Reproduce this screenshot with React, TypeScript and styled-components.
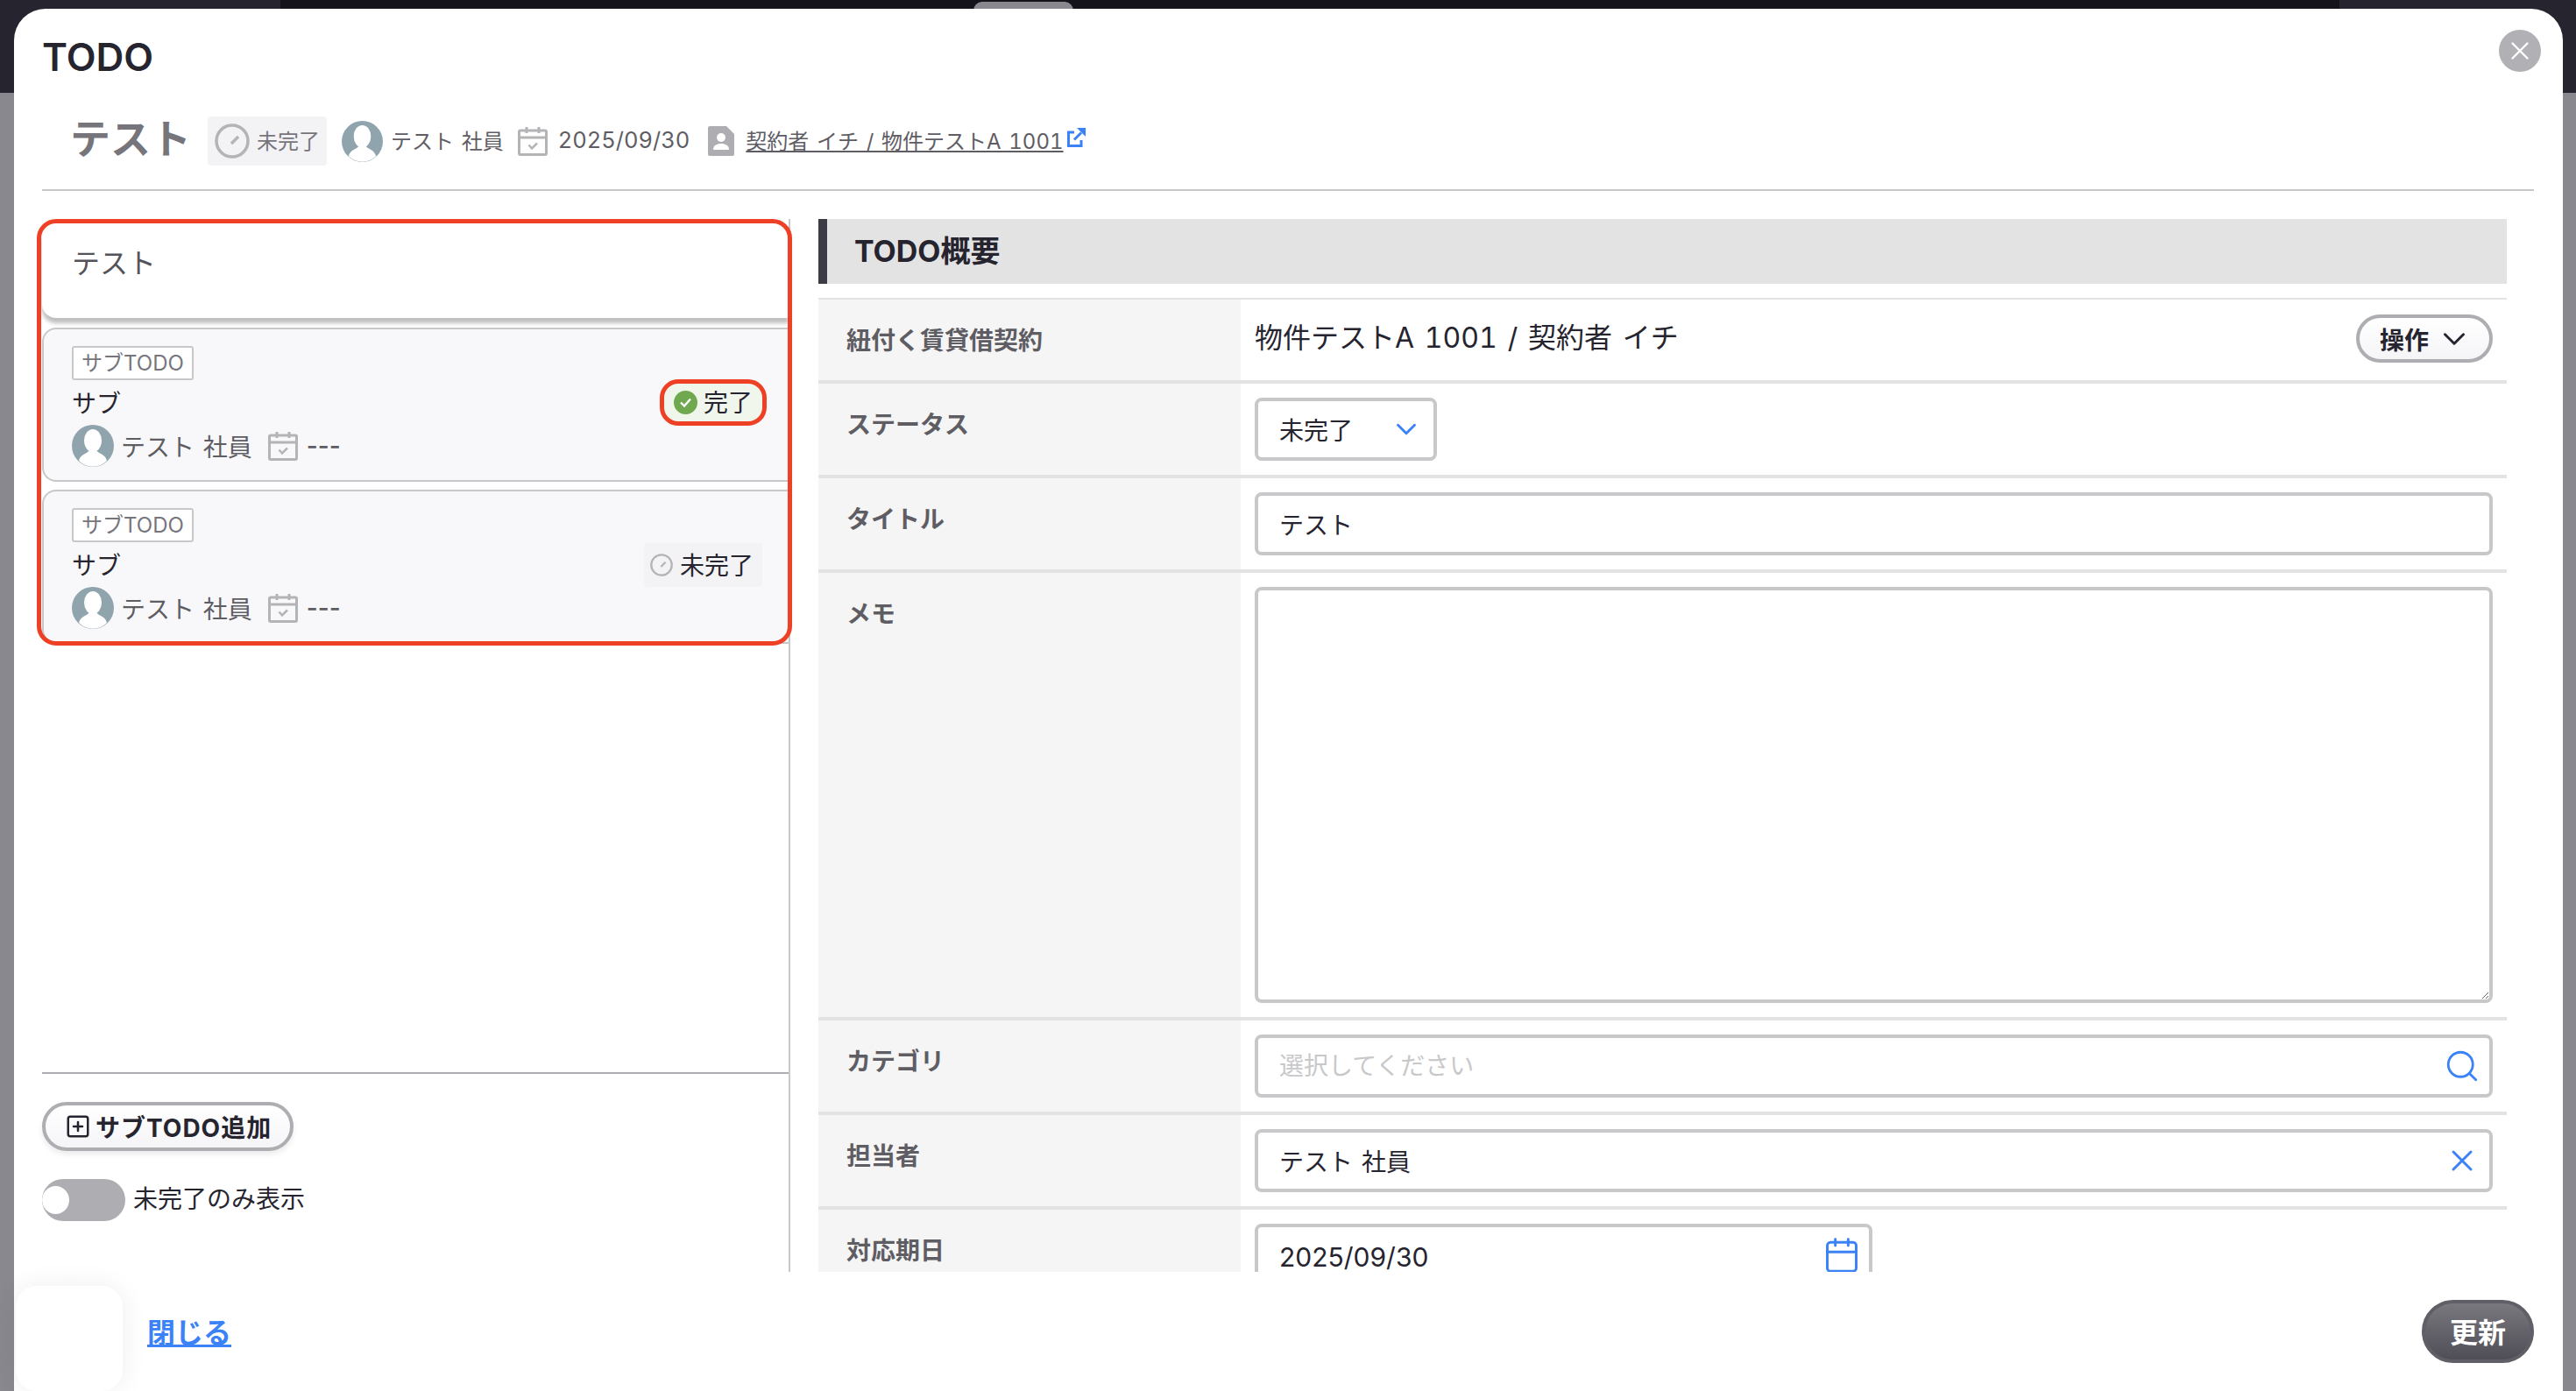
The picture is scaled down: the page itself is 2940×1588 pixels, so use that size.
import { createGlobalStyle, styled } from 'styled-components';
import { Calendar, ChevronDown, Search, SquarePlus, X } from 'lucide-react';

const GlobalStyle = createGlobalStyle`
  html, body {
    margin: 0;
    padding: 0;
    background: #8a888f;
  }
  * {
    box-sizing: border-box;
  }
  body {
    font-family: Inter, "Noto Sans CJK JP", "Noto Sans", sans-serif;
    font-variant-numeric: tabular-nums;
    color: #26242e;
    word-spacing: 0.14em;
  }
`;

function AvatarIcon({ size }: { size: number }) {
  return (
    <svg width={size} height={size} viewBox="0 0 48 48">
      <circle cx="24" cy="24" r="24" fill="#90a4ae" />
      <ellipse cx="24" cy="18" rx="10" ry="13" fill="#fff" />
      <path d="M8 41c2-8 10-8 12-12h8c2 4 10 4 12 12a22.5 22.5 0 0 1-32 0z" fill="#fff" />
    </svg>
  );
}

function PendingIcon({ size }: { size: number }) {
  return (
    <svg width={size} height={size} viewBox="0 0 40 40" fill="none">
      <circle cx="20" cy="20" r="18" stroke="#b4b4b7" strokeWidth="3.5" />
      <path d="M19 23l8-8" stroke="#b4b4b7" strokeWidth="3.5" />
    </svg>
  );
}

function DoneIcon() {
  return (
    <svg width="27" height="27" viewBox="0 0 27 27" fill="none">
      <circle cx="13.5" cy="13.5" r="13.5" fill="#6fa84f" />
      <path d="M8 13.5l4 4 7-8" stroke="#fff" strokeWidth="2.4" />
    </svg>
  );
}

function DateIcon({ size }: { size: number }) {
  return (
    <svg width={size} height={size} viewBox="0 0 34 34" fill="none" stroke="#b4b4b7">
      <rect x="1.5" y="5" width="31" height="27.5" rx="1.5" strokeWidth="3" />
      <path d="M1.5 13h31" strokeWidth="3" />
      <path d="M10 1v7M24 1v7" strokeWidth="3" />
      <path d="M12.5 21.5l3.5 4 6-6" strokeWidth="2.5" />
    </svg>
  );
}

function ContractIcon() {
  return (
    <svg width="30" height="34" viewBox="0 0 30 34">
      <path d="M2 0h19l9 9v23a2 2 0 0 1-2 2H2a2 2 0 0 1-2-2V2a2 2 0 0 1 2-2z" fill="#aeadb2" />
      <circle cx="15" cy="13" r="5" fill="#fff" />
      <path d="M6 27c0-5 4-7 9-7s9 2 9 7z" fill="#fff" />
    </svg>
  );
}

function ExternalIcon() {
  return (
    <svg width="21" height="22" viewBox="0 0 21 22" fill="none" stroke="#3b82f6" strokeWidth="3">
      <path d="M8 5H1.5v15.5H16V14" />
      <path d="M8 13.5L16 5.5" />
      <path d="M11 0h10v10z" fill="#3b82f6" stroke="none" />
    </svg>
  );
}

function StatusChip({ done, highlight }: { done: boolean; highlight?: boolean }) {
  return done ? (
    <DoneChip $highlight={highlight}>
      <DoneIcon />
      <ChipText>完了</ChipText>
    </DoneChip>
  ) : (
    <PendingChip>
      <PendingIcon size={26} />
      <ChipText>未完了</ChipText>
    </PendingChip>
  );
}

function SubTodoCard({ name, done }: { name: string; done: boolean }) {
  return (
    <SubCard>
      <SubCardBody>
        <SubTag>サブTODO</SubTag>
        <SubName>{name}</SubName>
        <SubMeta>
          <AvatarIcon size={48} />
          <SubPerson>テスト 社員</SubPerson>
          <DateIcon size={34} />
          <SubDate>---</SubDate>
        </SubMeta>
      </SubCardBody>
      <StatusChip done={done} highlight={done} />
    </SubCard>
  );
}

export default function App() {
  return (
    <Page>
      <GlobalStyle />
      <Backdrop>
        <TopBar>
          <TopBarSide />
          <TopBarMiddle />
          <TopBarSide />
          <Handle />
        </TopBar>
      </Backdrop>
      <Modal>
        <CloseButton>
          <X size={34} color="#fff" strokeWidth={1.7} />
        </CloseButton>
        <Title>TODO</Title>
        <MetaRow>
          <MetaTitle>テスト</MetaTitle>
          <MetaChip>
            <PendingIcon size={40} />
            <MetaText>未完了</MetaText>
          </MetaChip>
          <MetaItem $gap={9} $left={17}>
            <AvatarIcon size={47} />
            <MetaText>テスト 社員</MetaText>
          </MetaItem>
          <MetaItem $gap={12} $left={16}>
            <DateIcon size={34} />
            <MetaDate>2025/09/30</MetaDate>
          </MetaItem>
          <MetaItem $gap={13} $left={21}>
            <ContractIcon />
            <MetaLink>契約者 イチ / 物件テストA 1001</MetaLink>
            <ExternalSlot>
              <ExternalIcon />
            </ExternalSlot>
          </MetaItem>
        </MetaRow>
        <Body>
          <LeftColumn>
            <TodoList>
              <MainCard>テスト</MainCard>
              <SubCards>
                <SubTodoCard name="サブ" done />
                <SubTodoCard name="サブ" done={false} />
              </SubCards>
              <RedFrame />
            </TodoList>
            <LeftFooter>
              <AddButton>
                <SquarePlus size={30} strokeWidth={2} />
                サブTODO追加
              </AddButton>
              <ToggleRow>
                <Toggle>
                  <ToggleKnob />
                </Toggle>
                <ToggleLabel>未完了のみ表示</ToggleLabel>
              </ToggleRow>
            </LeftFooter>
          </LeftColumn>
          <RightColumn>
            <SectionHeader>TODO概要</SectionHeader>
            <Table>
              <Row>
                <Label>紐付く賃貸借契約</Label>
                <ContractValue>
                  <ContractText>物件テストA 1001 / 契約者 イチ</ContractText>
                  <ActionButton>
                    操作
                    <ChevronDown size={42} strokeWidth={1.7} />
                  </ActionButton>
                </ContractValue>
              </Row>
              <Row>
                <Label>ステータス</Label>
                <Value>
                  <SelectBox>
                    未完了
                    <ChevronDown size={38} color="#3b82f6" strokeWidth={1.8} />
                  </SelectBox>
                </Value>
              </Row>
              <Row>
                <Label>タイトル</Label>
                <Value>
                  <TextInput readOnly value="テスト" />
                </Value>
              </Row>
              <Row>
                <Label>メモ</Label>
                <Value>
                  <Memo readOnly />
                </Value>
              </Row>
              <Row>
                <Label>カテゴリ</Label>
                <Value>
                  <InputWrap>
                    <TextInput readOnly placeholder="選択してください" />
                    <FieldIcon $right={14}>
                      <Search size={42} color="#3b82f6" strokeWidth={1.6} />
                    </FieldIcon>
                  </InputWrap>
                </Value>
              </Row>
              <Row>
                <Label>担当者</Label>
                <Value>
                  <InputWrap>
                    <TextInput readOnly value="テスト 社員" />
                    <FieldIcon $right={15}>
                      <X size={40} color="#3b82f6" strokeWidth={1.8} />
                    </FieldIcon>
                  </InputWrap>
                </Value>
              </Row>
              <Row>
                <Label>対応期日</Label>
                <Value>
                  <DateWrap>
                    <DateInput readOnly value="2025/09/30" />
                    <FieldIcon $right={13}>
                      <Calendar size={44} color="#3b82f6" strokeWidth={1.6} />
                    </FieldIcon>
                  </DateWrap>
                </Value>
              </Row>
            </Table>
          </RightColumn>
        </Body>
        <Footer>
          <FloatingBox />
          <CloseLink>閉じる</CloseLink>
          <UpdateButton>更新</UpdateButton>
        </Footer>
      </Modal>
    </Page>
  );
}

const Page = styled.div`
  position: relative;
  width: 2940px;
  height: 1588px;
  overflow: hidden;
`;

const Backdrop = styled.div`
  height: 100%;
  background: #8a888f;
`;

const TopBar = styled.div`
  position: relative;
  display: grid;
  grid-template-columns: 320px 1fr 270px;
  height: 106px;
`;

const TopBarSide = styled.div`
  background: #26242f;
`;

const TopBarMiddle = styled.div`
  background: #14121a;
`;

const Handle = styled.div`
  position: absolute;
  left: 1111px;
  top: 2px;
  width: 114px;
  height: 12px;
  border-radius: 10px 10px 0 0;
  background: #8a888f;
`;

const Modal = styled.div`
  position: absolute;
  left: 16px;
  top: 10px;
  width: 2909px;
  height: 1578px;
  display: flex;
  flex-direction: column;
  padding: 0 33px 0 32px;
  background: #fff;
  border-radius: 36px 36px 0 0;
`;

const CloseButton = styled.div`
  position: absolute;
  top: 24px;
  right: 25px;
  width: 48px;
  height: 48px;
  display: flex;
  align-items: center;
  justify-content: center;
  border-radius: 50%;
  background: #b1b0b5;
`;

const Title = styled.div`
  margin-top: 29px;
  font-size: 44px;
  font-weight: 600;
  line-height: 52px;
  color: #26242e;
`;

const MetaRow = styled.div`
  display: flex;
  align-items: center;
  height: 56px;
  margin-top: 42px;
  padding-left: 35px;
  box-sizing: content-box;
  padding-bottom: 27px;
  border-bottom: 2px solid #c8c8ca;
  font-size: 24px;
  color: #5f5d64;
`;

const MetaTitle = styled.div`
  width: 155px;
  margin-left: -3px;
  margin-right: 2px;
  margin-bottom: 6px;
  font-size: 46px;
  line-height: 56px;
  font-weight: 700;
  color: #77757c;
`;

const MetaChip = styled.div`
  display: flex;
  align-items: center;
  gap: 8px;
  width: 136px;
  height: 56px;
  padding-left: 8px;
  background: #f3f3f5;
  border-radius: 4px;
  color: #77757c;
`;

const MetaText = styled.span`
  margin-bottom: 4px;
`;

const MetaItem = styled.div<{ $gap: number; $left: number }>`
  display: flex;
  align-items: center;
  gap: ${(p) => p.$gap}px;
  margin-left: ${(p) => p.$left}px;
`;

const MetaDate = styled(MetaText)`
  font-size: 25.5px;
`;

const MetaLink = styled(MetaText)`
  text-decoration: underline;
`;

const ExternalSlot = styled.span`
  display: flex;
  margin: -8px 0 0 -9px;
`;

const Body = styled.div`
  display: flex;
  gap: 32px;
  height: 1202px;
  margin-top: 32px;
`;

const LeftColumn = styled.div`
  display: flex;
  flex-direction: column;
  flex: 0 0 852px;
  padding-top: 5px;
  border-right: 2px solid #c8c8ca;
`;

const TodoList = styled.div`
  position: relative;
  width: 852px;
  height: 477px;
`;

const RedFrame = styled.div`
  position: absolute;
  top: -5px;
  left: -6px;
  right: -4px;
  bottom: -5px;
  border: 5px solid #ee4024;
  border-radius: 22px;
  pointer-events: none;
`;

const MainCard = styled.div`
  height: 108px;
  padding: 22px 34px;
  font-size: 32px;
  line-height: 48px;
  color: #55535a;
  background: #fff;
  border-radius: 16px 0 0 16px;
  box-shadow: 0 6px 4px rgba(0, 0, 0, 0.25);
`;

const SubCards = styled.div`
  display: flex;
  flex-direction: column;
  gap: 9px;
  margin-top: 11px;
`;

const SubCard = styled.div`
  display: flex;
  align-items: center;
  justify-content: space-between;
  height: 176px;
  padding: 18px 30px 15px 32px;
  background: #f8f8fa;
  border: 2px solid #c8c8ca;
  border-right: none;
  border-radius: 16px 0 0 16px;
`;

const SubCardBody = styled.div`
  display: flex;
  flex-direction: column;
  align-items: flex-start;
`;

const SubTag = styled.div`
  height: 39px;
  padding: 0 9px;
  font-size: 24px;
  line-height: 35px;
  color: #77757c;
  background: #fff;
  border: 2px solid #c8c8ca;
  border-radius: 3px;
`;

const SubName = styled.div`
  margin-top: 8px;
  font-size: 28px;
  line-height: 38px;
`;

const SubMeta = styled.div`
  display: flex;
  align-items: center;
  margin-top: 5px;
  font-size: 28px;
  color: #5f5d64;
`;

const SubPerson = styled.span`
  margin: 0 18px 0 8px;
`;

const SubDate = styled.span`
  margin-left: 10px;
  font-variant-numeric: normal;
  font-weight: 500;
`;

const ChipText = styled.span`
  margin-bottom: 2px;
`;

const DoneChip = styled.div<{ $highlight?: boolean }>`
  display: flex;
  align-items: center;
  gap: 7px;
  height: 43px;
  margin-bottom: 9px;
  padding: 0 11px;
  font-size: 28px;
  background: #f1f6ed;
  border-radius: 16px;
  outline: ${(p) => (p.$highlight ? '5px solid #ee4024' : 'none')};
`;

const PendingChip = styled.div`
  display: flex;
  align-items: center;
  gap: 8px;
  height: 50px;
  margin-bottom: 8px;
  padding: 0 10px 0 7px;
  font-size: 28px;
  background: #f3f3f5;
  border-radius: 4px;
`;

const LeftFooter = styled.div`
  height: 228px;
  margin-top: auto;
  padding-top: 32px;
  border-top: 2px solid #aeadb2;
`;

const AddButton = styled.div`
  display: flex;
  align-items: center;
  gap: 5px;
  width: 287px;
  height: 56px;
  padding-left: 22px;
  font-size: 28px;
  font-weight: 700;
  letter-spacing: 1px;
  background: linear-gradient(#fff, #f5f5f8);
  border: 4px solid #aeadb2;
  border-radius: 28px;
  box-shadow: 0 4px 6px rgba(0, 0, 0, 0.08);
`;

const ToggleRow = styled.div`
  display: flex;
  align-items: center;
  gap: 9px;
  margin-top: 32px;
  font-size: 28px;
`;

const ToggleLabel = styled.span`
  margin-bottom: 7px;
`;

const Toggle = styled.div`
  position: relative;
  width: 95px;
  height: 48px;
  background: #aeadb2;
  border-radius: 24px;
  overflow: hidden;
`;

const ToggleKnob = styled.div`
  position: absolute;
  left: 0;
  top: 8px;
  width: 31px;
  height: 32px;
  border-radius: 50%;
  background: #fff;
`;

const RightColumn = styled.div`
  flex: 0 0 1927px;
  overflow: hidden;
`;

const SectionHeader = styled.div`
  display: flex;
  align-items: center;
  height: 74px;
  padding: 0 0 6px 31px;
  font-size: 34px;
  font-weight: 700;
  background: #e3e3e3;
  border-left: 10px solid #3d3b44;
`;

const Table = styled.div`
  margin-top: 16px;
  border-top: 2px solid #e3e3e3;
`;

const Row = styled.div`
  display: grid;
  grid-template-columns: 482px 1fr;
  border-bottom: 4px solid #e3e3e3;
`;

const Label = styled.div`
  padding: 26px 0 0 32px;
  font-size: 28px;
  font-weight: 700;
  line-height: 42px;
  color: #5f5d64;
  background: #f5f5f5;
`;

const Value = styled.div`
  padding: 16px 16px 16px 16px;
`;

const ContractValue = styled.div`
  display: flex;
  align-items: center;
  justify-content: space-between;
  height: 92px;
  padding: 0 16px 0 16px;
  font-size: 32px;
`;

const ContractText = styled.span`
  margin-bottom: 10px;
  word-spacing: 0.1em;
`;

const ActionButton = styled.div`
  display: flex;
  align-items: center;
  gap: 8px;
  width: 156px;
  height: 55px;
  margin-bottom: 3px;
  padding-left: 23px;
  font-size: 28px;
  font-weight: 700;
  background: linear-gradient(#fff, #f5f5f8);
  border: 4px solid #aeadb2;
  border-radius: 28px;
`;

const SelectBox = styled.div`
  display: flex;
  align-items: center;
  justify-content: space-between;
  width: 208px;
  height: 72px;
  padding: 0 12px 0 24px;
  font-size: 28px;
  border: 4px solid #c8c8ca;
  border-radius: 8px;
`;

const TextInput = styled.input`
  display: block;
  width: 100%;
  height: 72px;
  padding: 0 24px;
  font-family: inherit;
  font-size: 28px;
  word-spacing: inherit;
  color: #26242e;
  border: 4px solid #c8c8ca;
  border-radius: 8px;
  outline: none;

  &::placeholder {
    color: #c8c8ca;
  }
`;

const Memo = styled.textarea`
  display: block;
  width: 100%;
  height: 475px;
  border: 4px solid #c8c8ca;
  border-radius: 8px;
  outline: none;
`;

const InputWrap = styled.div`
  position: relative;
`;

const DateWrap = styled(InputWrap)`
  width: 705px;
`;

const DateInput = styled(TextInput)`
  padding-top: 3px;
  font-size: 30px;
`;

const FieldIcon = styled.div<{ $right: number }>`
  position: absolute;
  top: 0;
  right: ${(p) => p.$right}px;
  height: 72px;
  display: flex;
  align-items: center;
`;

const Footer = styled.div`
  position: relative;
  display: flex;
  flex: 1;
  align-items: center;
  justify-content: space-between;
  padding-left: 120px;
`;

const FloatingBox = styled.div`
  position: absolute;
  left: -30px;
  bottom: 0;
  width: 122px;
  height: 120px;
  background: #fff;
  border-radius: 24px;
  box-shadow: 0 0 30px rgba(0, 0, 0, 0.07);
`;

const CloseLink = styled.a`
  position: relative;
  margin-bottom: 3px;
  font-size: 32px;
  font-weight: 700;
  color: #3b82f6;
  text-decoration: underline;
`;

const UpdateButton = styled.div`
  display: flex;
  align-items: center;
  justify-content: center;
  width: 128px;
  height: 72px;
  padding-bottom: 2px;
  font-size: 32px;
  font-weight: 700;
  color: #fff;
  background: linear-gradient(#7a787f, #4f4d55);
  border: 4px solid #605e66;
  border-radius: 36px;
`;
